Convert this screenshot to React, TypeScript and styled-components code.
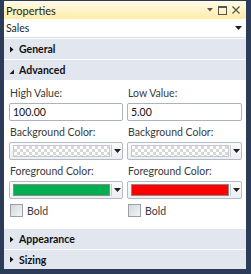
import React from 'react';
import styled, { createGlobalStyle } from 'styled-components';

const GlobalStyle = createGlobalStyle`
  html, body {
    margin: 0;
    padding: 0;
    background: #2b3b58;
  }
  body {
    font-family: Lato, "Liberation Sans", sans-serif;
  }
`;

const Frame = styled.div`
  width: 251px;
  height: 274px;
  box-sizing: border-box;
  padding: 1px 5px 5px 4px;
  background: #2b3b58;
`;

const Panel = styled.div`
  display: flex;
  flex-direction: column;
  height: 100%;
  background: #ffffff;
`;

const TitleBar = styled.div`
  display: flex;
  align-items: center;
  height: 18px;
  padding: 0 6px 0 2px;
  background: linear-gradient(#fffbe8, #ffeca8);
  color: #1e1e1e;
  font-size: 11px;
`;

const TitleText = styled.span`
  flex: 1;
`;

const TitleButtons = styled.div`
  display: flex;
  align-items: center;
  gap: 5px;
  color: #555;
`;

const ComboRow = styled.div`
  display: flex;
  align-items: center;
  height: 18px;
  padding: 0 4px 0 2px;
  background: #fff;
  color: #1e1e1e;
  font-size: 10.5px;
  border-bottom: 1px solid #d9dee8;
`;

const ComboText = styled.span`
  flex: 1;
`;

const Arrow = () => (
  <svg width="7" height="4" viewBox="0 0 7 4">
    <path d="M0 0h7L3.5 4z" fill="#1e1e1e" />
  </svg>
);

const Header = styled.div<{ $h?: number }>`
  display: flex;
  align-items: center;
  gap: 5px;
  height: ${p => p.$h ?? 20}px;
  padding-left: 5px;
  background: #e2e6ee;
  border-top: 1px solid #ffffff;
  font-weight: 700;
  font-size: 10.5px;
  color: #111;
`;

const Caret = ({ open }: { open?: boolean }) =>
  open ? (
    <svg width="5" height="7" viewBox="0 0 5 7">
      <path d="M5 2.5V7H0.5z" fill="#222" />
    </svg>
  ) : (
    <svg width="5" height="7" viewBox="0 0 5 7">
      <path d="M1 0.5L4.5 3.5L1 6.5z" fill="#111" />
    </svg>
  );

const Content = styled.div`
  flex: 1;
  display: grid;
  grid-template-columns: 114px 115px;
  column-gap: 4px;
  row-gap: 4px;
  align-content: start;
  padding: 6px 4px 0 5px;
`;

const Field = styled.div`
  display: flex;
  flex-direction: column;
  gap: 2px;
`;

const Label = styled.div`
  height: 15px;
  line-height: 15px;
  font-size: 10.5px;
  color: #3a3a3a;
  padding-left: 1px;
`;

const TextBox = styled.div`
  height: 18px;
  box-sizing: border-box;
  border: 1px solid #abb3c0;
  border-radius: 2px;
  background: #fff;
  padding: 0 3px;
  line-height: 16px;
  font-size: 10.5px;
  color: #111;
`;

const ColorBox = styled.div`
  display: flex;
  align-items: center;
  height: 18px;
  box-sizing: border-box;
  border: 1px solid #b4bbc7;
  border-radius: 2px;
  background: linear-gradient(#fbfbfc, #eceef2);
  padding: 2px 0 2px 3px;
`;

const Swatch = styled.div<{ $color?: string }>`
  flex: 1;
  height: 100%;
  box-sizing: border-box;
  border: 1px solid ${p => (p.$color ? '#8a8a8a' : '#c6c9cf')};
  background: ${p =>
    p.$color ??
    'repeating-conic-gradient(#d8d8d8 0% 25%, #ffffff 0% 50%) 0 0 / 6px 6px'};
`;

const DropPart = styled.div`
  display: flex;
  align-items: center;
  justify-content: center;
  width: 10px;
  height: 100%;
  margin-left: 1px;
  border-left: 1px solid #c6cad2;
`;

const CheckRow = styled.label`
  display: flex;
  align-items: center;
  gap: 4px;
  margin-top: 1px;
  font-size: 10.5px;
  color: #3a3a3a;
  padding-left: 1px;
`;

const CheckBox = styled.span`
  width: 11px;
  height: 11px;
  border: 1px solid #9aa0a8;
  background: linear-gradient(135deg, #d4d6da, #f4f5f7);
`;

const ColorField = ({ label, color }: { label: string; color?: string }) => (
  <Field>
    <Label>{label}</Label>
    <ColorBox>
      <Swatch $color={color} />
      <DropPart>
        <Arrow />
      </DropPart>
    </ColorBox>
  </Field>
);

export default function App() {
  return (
    <>
      <GlobalStyle />
      <Frame>
        <Panel>
          <TitleBar>
            <TitleText>Properties</TitleText>
            <TitleButtons>
              <svg width="6" height="4" viewBox="0 0 6 4">
                <path d="M0 0h6L3 3.5z" fill="#555" />
              </svg>
              <svg width="9" height="9" viewBox="0 0 9 9">
                <rect x="0.5" y="0.5" width="8" height="8" fill="none" stroke="#555" />
                <rect x="0.5" y="0.5" width="8" height="1.5" fill="#555" />
              </svg>
              <svg width="8" height="8" viewBox="0 0 8 8">
                <path d="M0.5 0.5L7.5 7.5M7.5 0.5L0.5 7.5" stroke="#555" strokeWidth="1.3" />
              </svg>
            </TitleButtons>
          </TitleBar>
          <ComboRow>
            <ComboText>Sales</ComboText>
            <Arrow />
          </ComboRow>
          <Header>
            <Caret />
            General
          </Header>
          <Header>
            <Caret open />
            Advanced
          </Header>
          <Content>
            <Field>
              <Label>High Value:</Label>
              <TextBox>100.00</TextBox>
            </Field>
            <Field>
              <Label>Low Value:</Label>
              <TextBox>5.00</TextBox>
            </Field>
            <ColorField label="Background Color:" />
            <ColorField label="Background Color:" />
            <ColorField label="Foreground Color:" color="#00b050" />
            <ColorField label="Foreground Color:" color="#ff0000" />
            <CheckRow>
              <CheckBox />
              Bold
            </CheckRow>
            <CheckRow>
              <CheckBox />
              Bold
            </CheckRow>
          </Content>
          <Header>
            <Caret />
            Appearance
          </Header>
          <Header $h={19}>
            <Caret />
            Sizing
          </Header>
        </Panel>
      </Frame>
    </>
  );
}
